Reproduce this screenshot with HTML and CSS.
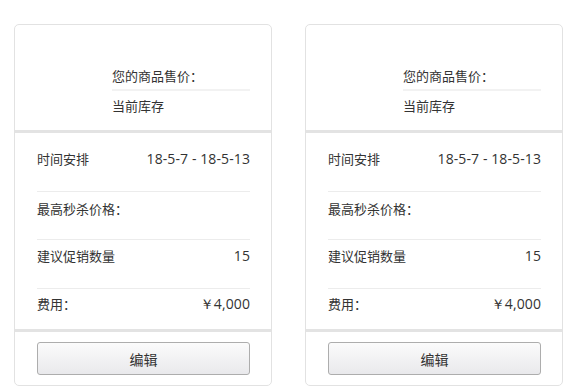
FILE: index.html
```html
<!DOCTYPE html>
<html><head>
<meta charset="utf-8">
<title>秒杀活动</title>
<link rel="stylesheet" href="styles.css">
</head>
<body>

<div class="cards">
	<div class="card">
		<div class="head">
			<div class="thumb"></div>
			<div class="info">
				<div class="line">您的商品售价：</div>
				<div class="line">当前库存</div>
			</div>
		</div>
		<div class="rows">
			<div class="row first"><span>时间安排</span><span class="num">18-5-7 - 18-5-13</span></div>
			<div class="row"><span>最高秒杀价格：</span><span></span></div>
			<div class="row third"><span>建议促销数量</span><span class="num">15</span></div>
			<div class="row last"><span>费用：</span><span class="num">￥4,000</span></div>
		</div>
		<div class="foot">
			<button class="btn">编辑</button>
		</div>
	</div>

	<div class="card">
		<div class="head">
			<div class="thumb"></div>
			<div class="info">
				<div class="line">您的商品售价：</div>
				<div class="line">当前库存</div>
			</div>
		</div>
		<div class="rows">
			<div class="row first"><span>时间安排</span><span class="num">18-5-7 - 18-5-13</span></div>
			<div class="row"><span>最高秒杀价格：</span><span></span></div>
			<div class="row third"><span>建议促销数量</span><span class="num">15</span></div>
			<div class="row last"><span>费用：</span><span class="num">￥4,000</span></div>
		</div>
		<div class="foot">
			<button class="btn">编辑</button>
		</div>
	</div>
</div>

</body></html>
```

FILE: styles.css
```css
body {
	margin: 0;
	background: #fff;
	font: 13px/18px "Noto Sans CJK SC", "Noto Sans", sans-serif;
	color: #333;
}

.cards {
	display: flex;
	gap: 33px;
	padding: 24px 0 0 14px;
}

.card {
	width: 258px;
	box-sizing: border-box;
	border: 1px solid #e2e2e2;
	border-radius: 5px;
	background: #fff;
}

	.head {
		display: flex;
		height: 105px;
		border-bottom: 3px solid #e3e3e3;
	}

		.thumb {
			width: 97px;
			flex: none;
		}

		.info {
			width: 138px;
			padding-top: 43px;
		}

			.line {
				height: 16px;
				line-height: 16px;
			}

			.line + .line {
				margin-top: 5px;
				padding-top: 7px;
				border-top: 2px solid #f2f2f2;
			}

	.rows {
		padding: 0 21px 0 22px;
	}

		.row {
			display: flex;
			justify-content: space-between;
			height: 48px;
			padding-top: 8px;
			box-sizing: border-box;
			border-bottom: 1px solid #ececec;
		}

		.row.first {
			height: 59px;
			padding-top: 17px;
		}

		.row.third {
			height: 49px;
			padding-top: 7px;
		}

		.row.last {
			height: 40px;
			padding-top: 6px;
			border-bottom: 0;
		}

		.num {
			font-family: "Open Sans", "Noto Sans", sans-serif;
			font-size: 14px;
			letter-spacing: 0.1px;
		}

	.foot {
		border-top: 3px solid #e3e3e3;
		padding: 10px 21px 10px 22px;
	}

		.btn {
			display: block;
			width: 100%;
			height: 33px;
			border: 1px solid #adadad;
			border-radius: 3px;
			background: linear-gradient(#fbfbfb, #e9e9ec);
			font: 14px "Noto Sans CJK SC", sans-serif;
			color: #333;
		}
```
